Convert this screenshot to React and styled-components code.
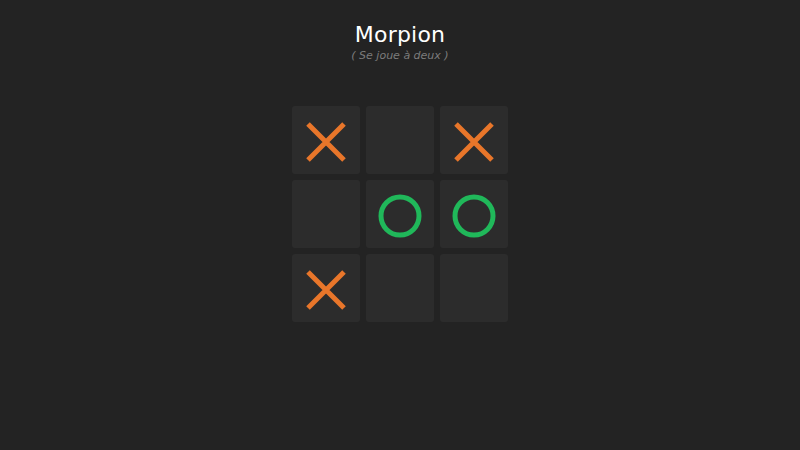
import styled, { createGlobalStyle } from "styled-components";

const board = ["x", "", "x", "", "o", "o", "x", "", ""];

const GlobalStyle = createGlobalStyle`
  html, body {
    margin: 0;
    background: #232323;
    font-family: "DejaVu Sans", "Open Sans", sans-serif;
  }
`;

const Page = styled.div`
  height: 450px;
  display: flex;
  flex-direction: column;
  align-items: center;
  padding-top: 22px;
  box-sizing: border-box;
`;

const Title = styled.h1`
  margin: 0;
  font-size: 22px;
  font-weight: 500;
  color: #ffffff;
  line-height: 26px;
  letter-spacing: 0.2px;
`;

const Subtitle = styled.p`
  margin: 1px 0 0;
  font-size: 11px;
  font-style: italic;
  font-weight: 300;
  color: #7c7c7c;
  line-height: 14px;
`;

const Grid = styled.div`
  margin-top: 43px;
  margin-left: -1px;
  display: grid;
  grid-template-columns: repeat(3, 68px);
  grid-auto-rows: 68px;
  gap: 6px;
`;

const Cell = styled.div`
  background: #2c2c2c;
  border-radius: 3px;
  display: flex;
  align-items: center;
  justify-content: center;
  padding-top: 4px;
  box-sizing: border-box;
`;

function Cross() {
  return (
    <svg width="42" height="40" viewBox="0 0 42 40">
      <path
        d="M3 2 L39 38 M39 2 L3 38"
        stroke="#e8762a"
        strokeWidth="5"
        fill="none"
      />
    </svg>
  );
}

function Nought() {
  return (
    <svg width="44" height="44" viewBox="0 0 44 44">
      <circle cx="22" cy="22" r="19" stroke="#20b85a" strokeWidth="5" fill="none" />
    </svg>
  );
}

export default function App() {
  return (
    <>
      <GlobalStyle />
      <Page>
        <Title>Morpion</Title>
        <Subtitle>( Se joue à deux )</Subtitle>
        <Grid>
          {board.map((v, i) => (
            <Cell key={i}>
              {v === "x" && <Cross />}
              {v === "o" && <Nought />}
            </Cell>
          ))}
        </Grid>
      </Page>
    </>
  );
}
